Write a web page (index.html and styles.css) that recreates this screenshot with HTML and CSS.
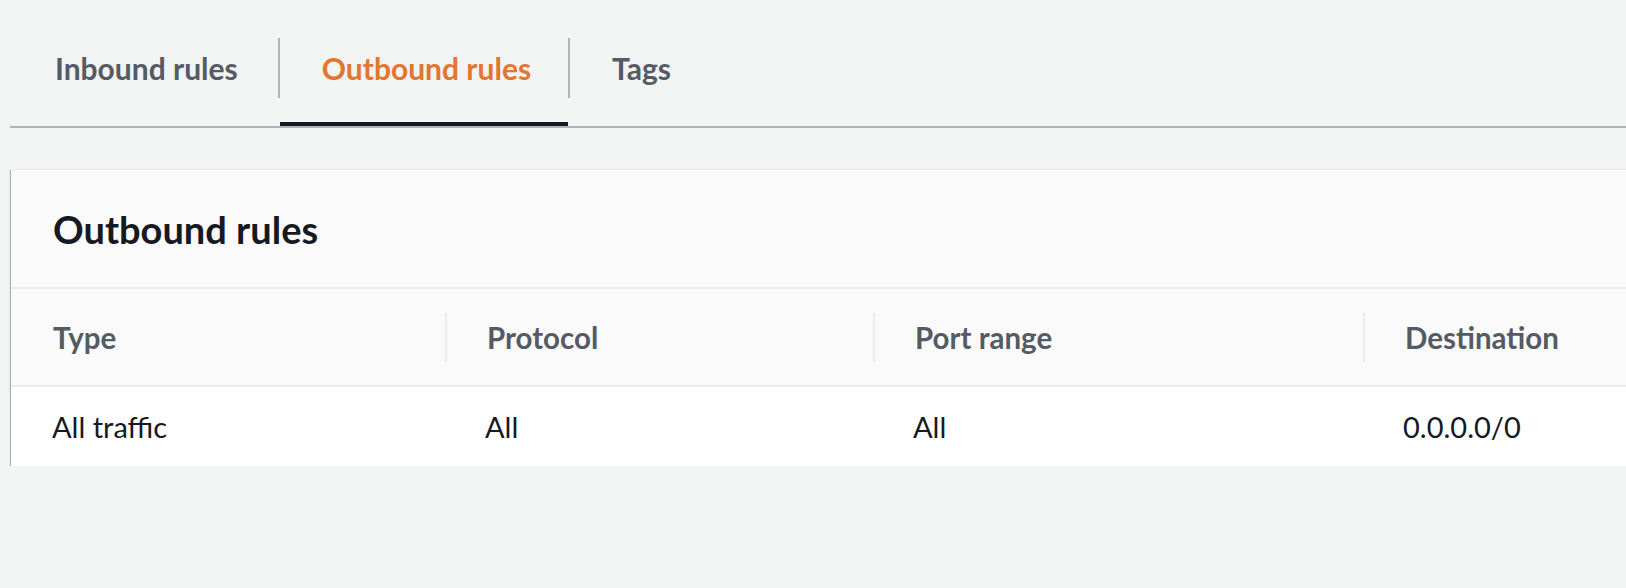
FILE: index.html
```html
<!DOCTYPE html>
<html lang="en">
<head>
<meta charset="utf-8">
<title>Outbound rules</title>
<link rel="stylesheet" href="styles.css">
</head>
<body>
  <div class="tabs">
    <div class="tab tab-first">Inbound rules</div>
    <div class="tab-sep"></div>
    <div class="tab tab-active">Outbound rules</div>
    <div class="tab-sep"></div>
    <div class="tab">Tags</div>
  </div>

  <section class="card">
    <header class="card-header">
      <h2 class="card-title">Outbound rules</h2>
    </header>
    <div class="table">
      <div class="row row-head">
        <div class="th th-first"><span class="th-inner">Type</span></div>
        <div class="th"><span class="th-inner">Protocol</span></div>
        <div class="th"><span class="th-inner">Port range</span></div>
        <div class="th"><span class="th-inner">Destination</span></div>
      </div>
      <div class="row row-body">
        <div class="td td-first">All traffic</div>
        <div class="td">All</div>
        <div class="td">All</div>
        <div class="td">0.0.0.0/0</div>
      </div>
    </div>
  </section>
</body>
</html>
```

FILE: styles.css
```css
html, body {
  margin: 0;
  padding: 0;
}

body {
  background: #f2f3f3;
  font-family: "Lato", "Open Sans", "Liberation Sans", sans-serif;
  color: #16191f;
  overflow: hidden;
}

/* Tabs */
.tabs {
  display: flex;
  align-items: flex-start;
  margin-left: 10px;
  padding-top: 38px;
  border-bottom: 2px solid #aab7b8;
}

.tab {
  box-sizing: border-box;
  height: 88px;
  line-height: 60px;
  padding: 0 41px 0 42px;
  font-size: 30px;
  font-weight: 700;
  color: #545b64;
  white-space: nowrap;
}

.tab-first {
  padding-left: 45px;
  padding-right: 40px;
}

.tab-active {
  padding-right: 37px;
  color: #e27530;
  border-bottom: 4px solid #16191f;
}

.tab-sep {
  flex: 0 0 2px;
  width: 2px;
  height: 60px;
  background: #aab7b8;
}

/* Card */
.card {
  margin: 41px 0 0 11px;
  width: 1700px;
  background: #fafafa;
  border-top: 1px solid #eaeded;
  box-shadow: 0 2px 1px 0 rgba(0, 28, 36, 0.35),
              0 1px 0 0 rgba(0, 28, 36, 0.25),
              -1px 1px 1px 0 rgba(0, 28, 36, 0.25);
}

.card-header {
  box-sizing: border-box;
  height: 119px;
  padding-left: 42px;
  display: flex;
  align-items: center;
  border-bottom: 2px solid #eaeded;
}

.card-title {
  margin: 0;
  font-size: 38px;
  font-weight: 700;
  color: #16191f;
}

/* Table */
.row {
  display: grid;
  grid-template-columns: 434px 428px 490px 1fr;
}

.row-head {
  height: 96px;
  border-bottom: 2px solid #eaeded;
  background: #fafafa;
}

.th {
  display: flex;
  align-items: center;
}

.th-inner {
  display: flex;
  align-items: center;
  height: 49px;
  padding-left: 40px;
  border-left: 2px solid #eaeded;
  font-size: 29.5px;
  font-weight: 700;
  color: #545b64;
}

.th-first .th-inner {
  border-left-color: transparent;
}

.row-body {
  height: 79px;
  background: #ffffff;
}

.td {
  display: flex;
  align-items: center;
  padding-left: 40px;
  font-size: 29px;
  color: #16191f;
}

.td-first {
  padding-left: 41px;
}
```
